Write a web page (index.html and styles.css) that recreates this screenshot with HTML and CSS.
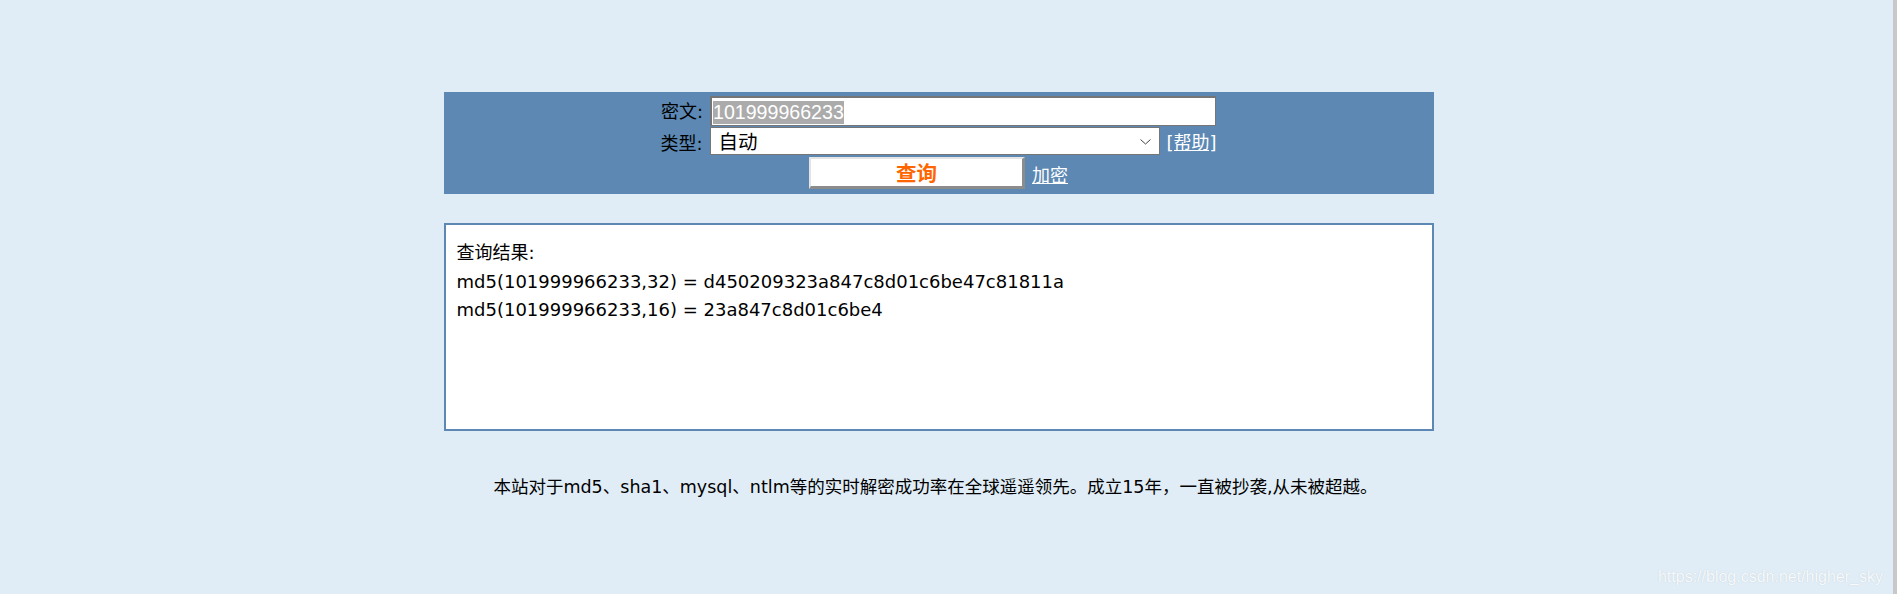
FILE: index.html
```html
<!DOCTYPE html>
<html lang="zh-CN">
<head>
<meta charset="utf-8">
<title>md5 查询</title>
<link rel="stylesheet" href="styles.css">
</head>
<body>
<div class="page">
  <div class="panel">
    <div class="row row-1">
      <span class="label">密文:</span>
      <div class="field"><span class="sel">101999966233</span></div>
    </div>
    <div class="row row-2">
      <span class="label">类型:</span>
      <div class="select">
        <span class="select-text">自动</span>
        <svg class="chev" width="11" height="6" viewBox="0 0 11 6"><polyline points="0.5,0.5 5.5,5 10.5,0.5" fill="none" stroke="#444" stroke-width="1"/></svg>
      </div>
      <a class="link" href="#">[帮助]</a>
    </div>
    <div class="row row-3">
      <button class="btn" type="button">查询</button>
      <a class="link" href="#">加密</a>
    </div>
  </div>

  <div class="result">
    <div class="line">查询结果:</div>
    <div class="line">md5(101999966233,32) = d450209323a847c8d01c6be47c81811a</div>
    <div class="line">md5(101999966233,16) = 23a847c8d01c6be4</div>
  </div>

  <p class="footer">本站对于md5、sha1、mysql、ntlm等的实时解密成功率在全球遥遥领先。成立15年，一直被抄袭,从未被超越。</p>

  <div class="watermark">https://blog.csdn.net/higher_sky</div>
</div>
</body>
</html>
```
FILE: styles.css
```css
html, body {
  margin: 0;
  padding: 0;
  background: #e0edf6;
}

body {
  font-family: "DejaVu Sans", "Noto Sans CJK SC", sans-serif;
  color: #000;
}

.page {
  position: relative;
  box-sizing: border-box;
  width: 1897px;
  height: 594px;
  padding-top: 92px;
  padding-right: 16px;
  border-right: 4px solid #c8c8c8;
  overflow: hidden;
}

.panel {
  box-sizing: border-box;
  width: 990px;
  height: 102px;
  margin: 0 auto;
  background: #5c88b3;
  padding-top: 4px;
  display: flex;
  flex-direction: column;
  gap: 1px;
}

.row {
  display: flex;
  justify-content: center;
  align-items: center;
  gap: 7px;
  font-size: 18px;
}

.row-1 { height: 30px; }
.row-2 { height: 28px; margin-top: 0; }
.row-3 { height: 32px; margin-top: 1px; }

.label {
  color: #000;
  line-height: 1;
  position: relative;
  top: 1px;
}

.row-2 .label { top: 3px; }

.field {
  box-sizing: border-box;
  width: 506px;
  height: 30px;
  background: #fff;
  border: 1px solid #767676;
  border-top-width: 2px;
  border-left-width: 2px;
  padding: 1px 0 0 1px;
  display: flex;
  align-items: center;
}

.sel {
  font-family: "Liberation Sans", Arial, sans-serif;
  font-size: 19.6px;
  line-height: 23px;
  background: #ababab;
  color: #fff;
}

.select {
  box-sizing: border-box;
  width: 450px;
  height: 28px;
  background: #fff;
  border: 1px solid #767676;
  display: flex;
  align-items: center;
  justify-content: space-between;
  padding: 0 8px 0 8px;
}

.select-text {
  font-family: "Noto Sans CJK SC", sans-serif;
  font-size: 19.5px;
  line-height: 1;
  color: #000;
}

.chev {
  display: block;
  margin-top: 1px;
}

.link {
  color: #fff;
  text-decoration: underline;
  font-size: 18px;
  line-height: 1;
}

.row-2 .link { position: relative; top: 2px; }
.row-3 .link { position: relative; top: 3px; }

.btn {
  box-sizing: border-box;
  width: 216px;
  height: 32px;
  background: #fff;
  border-style: solid;
  border-width: 2px 3px 3px 2px;
  border-color: #e4e4e4 #8c8c8c #8c8c8c #e4e4e4;
  padding: 0;
  margin: 0;
  font-family: "Noto Sans CJK SC", sans-serif;
  font-size: 20.5px;
  font-weight: bold;
  color: #ff6600;
  line-height: 1;
  cursor: pointer;
}

.result {
  box-sizing: border-box;
  width: 990px;
  height: 208px;
  margin: 29px auto 0;
  background: #fff;
  border: 2px solid #5c88b3;
  padding: 14px 11px 0;
  font-size: 18px;
  line-height: 28.5px;
}

.footer {
  margin: 43px 0 0;
  padding-right: 6px;
  text-align: center;
  font-size: 17.5px;
  line-height: 26px;
  color: #000;
}

.watermark {
  position: absolute;
  right: 10px;
  bottom: 8px;
  font-family: "Liberation Sans", Arial, sans-serif;
  font-size: 16px;
  line-height: 18px;
  color: #f7fafc;
  text-shadow: 0 0 1px rgba(120, 130, 140, 0.35);
}
```
